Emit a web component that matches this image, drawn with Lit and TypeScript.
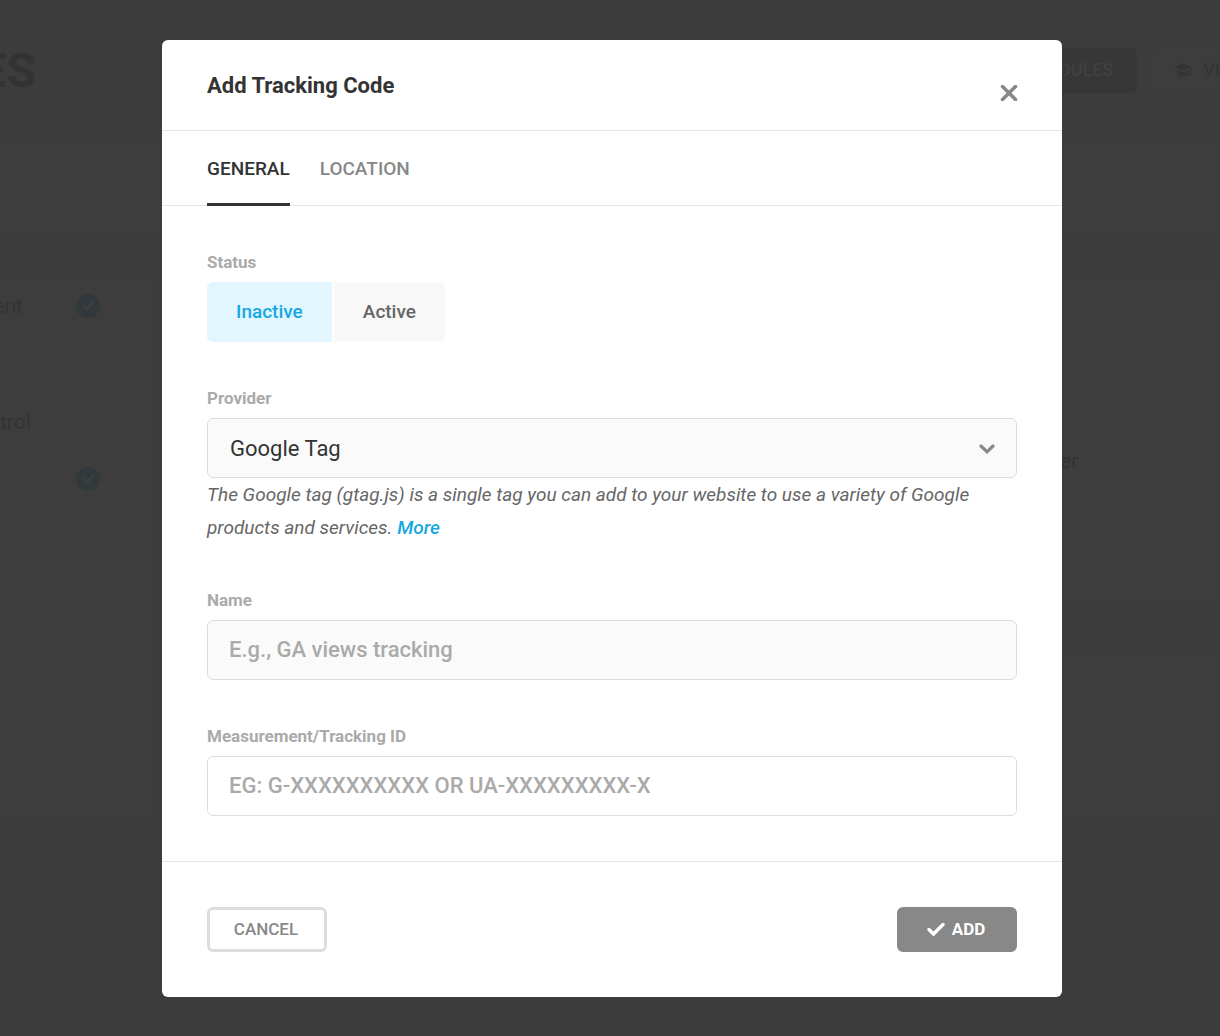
import { LitElement, html, css, svg } from "lit";
import { customElement, state } from "lit/decorators.js";

const tick = svg`<path d="M2 8.500 6.500 13 16 3.500" fill="none" stroke="currentColor" stroke-width="3.400" stroke-linecap="round"/>`;

/* Dimmed page that stays behind the dialog. */
@customElement("page-backdrop")
export class PageBackdrop extends LitElement {
  static styles = css`
    :host {
      display: block;
      min-height: 100vh;
      overflow: hidden;
      background: #3c3c3c;
      color: #333;
      font-family: Roboto, "Liberation Sans", sans-serif;
    }
    .top {
      display: flex;
      align-items: center;
      justify-content: space-between;
      height: 45px;
      padding: 48px 0 52px;
    }
    .heading {
      display: flex;
      justify-content: flex-end;
      width: 36px;
      margin: 0;
      font-size: 48px;
      line-height: 45px;
      font-weight: 700;
    }
    .actions {
      display: flex;
      gap: 17px;
    }
    .action {
      display: flex;
      align-items: center;
      gap: 10px;
      box-sizing: border-box;
      height: 45px;
      border: 0;
      border-radius: 6px 0 0 6px;
      padding: 0 0 2px 19px;
      background: #3d3d3d;
      color: #343434;
      font: 500 18px Roboto, "Liberation Sans", sans-serif;
    }
    .action.filled {
      border-radius: 6px;
      padding: 0 24px 2px;
      background: #373737;
      color: #404040;
    }
    .card {
      background: #3d3d3d;
      height: 92px;
    }
    .columns {
      display: flex;
      justify-content: space-between;
      margin-top: 45px;
    }
    .column {
      display: flex;
      flex-direction: column;
      width: 160px;
      font-size: 21px;
      line-height: 24px;
    }
    .left {
      box-sizing: border-box;
      background: #3d3d3d;
      width: 155px;
      padding-top: 12px;
    }
    .row {
      display: flex;
      align-items: center;
      justify-content: space-between;
      height: 24px;
      padding-right: 55px;
      margin-bottom: 92px;
    }
    .row.tight {
      margin-bottom: 33px;
    }
    .row.end {
      justify-content: flex-end;
    }
    .clipped {
      display: flex;
      justify-content: flex-end;
      width: 23px;
    }
    .badge {
      width: 24px;
      height: 24px;
    }
    .panel {
      box-sizing: border-box;
      background: #3d3d3d;
      height: 316px;
      padding-top: 167px;
    }
    .panel.short {
      height: 86px;
      margin-top: 53px;
    }
  `;

  private badge() {
    return html`<svg class="badge" viewBox="0 0 24 24" aria-hidden="true">
      <circle cx="12" cy="12" r="12" fill="#31393d" />
      <path d="m7.500 12.200 3.200 3.200 6.200-6.200" fill="none" stroke="#3e3e3e" stroke-width="3" stroke-linecap="round" />
    </svg>`;
  }

  render() {
    return html`
      <div class="top">
        <h1 class="heading">ES</h1>
        <div class="actions">
          <button class="action filled">DULES</button>
          <button class="action">
            <svg width="20" height="16" viewBox="0 0 20 16" aria-hidden="true">
              <path d="M10 1 0.8 4.9 10 8.8l7.2-3.1v4.5c-.6.4-.9 1-.3 1.7L16.300 14h2.600l-.5-2.100c.5-.7.3-1.300-.2-1.700V5.200zM4 7.700v4.400c2.500 3.200 9.500 3.200 12 0V7.700l-6 2.600z" fill="#343434" />
            </svg>
            VI
          </button>
        </div>
      </div>
      <div class="card"></div>
      <div class="columns">
        <div class="column left">
          <div class="row"><span class="clipped">ent</span>${this.badge()}</div>
          <div class="row tight"><span>trol</span></div>
          <div class="row end">${this.badge()}</div>
        </div>
        <div class="column">
          <div class="panel">er</div>
          <div class="panel short"></div>
        </div>
      </div>
    `;
  }
}

@customElement("tracking-dialog")
export class TrackingDialog extends LitElement {
  static styles = css`
    :host {
      display: block;
      width: 100%;
      max-width: 900px;
      overflow: hidden;
      border-radius: 6px;
      background: #fff;
      color: #333;
      font-family: Roboto, "Liberation Sans", sans-serif;
    }
    button,
    input,
    select {
      font-family: inherit;
      margin: 0;
    }
    .header {
      display: flex;
      align-items: flex-start;
      justify-content: space-between;
      padding: 30px 37px 22px 45px;
      border-bottom: 1px solid #e6e6e6;
    }
    .title {
      margin: 0;
      font-size: 22px;
      line-height: 32px;
      font-weight: 700;
    }
    .close {
      display: flex;
      margin-top: 8px;
      border: 0;
      padding: 7px;
      background: none;
      color: #888;
    }
    .tabs {
      display: flex;
      gap: 30px;
      padding: 0 45px;
      border-bottom: 1px solid #e6e6e6;
    }
    .tab {
      height: 75px;
      margin-bottom: -1px;
      border: 0;
      border-bottom: 3px solid transparent;
      padding: 2px 0 0;
      background: none;
      color: #888;
      font-size: 19px;
      font-weight: 500;
    }
    .tab.selected {
      border-color: #333;
      color: #333;
    }
    .body {
      display: flex;
      flex-direction: column;
      gap: 45px;
      padding: 45px;
    }
    .field {
      display: flex;
      flex-direction: column;
      min-width: 0;
      border: 0;
      margin: 0;
      padding: 0;
    }
    .label {
      margin-bottom: 8px;
      padding: 0;
      color: #aaa;
      font-size: 17px;
      line-height: 23px;
      font-weight: 700;
    }
    .switch {
      display: flex;
      gap: 2px;
    }
    .option {
      position: relative;
      padding: 0 29px;
      background: #f8f8f8;
      color: #666;
      font-size: 19px;
      line-height: 60px;
      font-weight: 500;
    }
    .option:first-child {
      border-radius: 6px 0 0 6px;
    }
    .option:last-child {
      border-radius: 0 6px 6px 0;
    }
    .option.on {
      background: #e1f6ff;
      color: #17a8e3;
    }
    .radio {
      position: absolute;
      inset: 0;
      opacity: 0;
    }
    .picker {
      display: grid;
      align-items: center;
    }
    .picker > * {
      grid-area: 1 / 1;
    }
    .chevron {
      justify-self: end;
      margin-right: 22px;
      color: #888;
      pointer-events: none;
    }
    .control {
      box-sizing: border-box;
      width: 100%;
      height: 60px;
      border: 1px solid #ddd;
      border-radius: 6px;
      padding: 0 21px 2px;
      background: #fafafa;
      color: #333;
      font-size: 22px;
      font-weight: 500;
      outline: none;
      appearance: none;
    }
    .control.plain {
      background: #fff;
    }
    .control.choice {
      padding: 0 22px;
      font-weight: 400;
    }
    .control::placeholder {
      color: #aaa;
      opacity: 1;
    }
    .hint {
      margin: 0;
      color: #666;
      font-size: 19px;
      line-height: 33px;
      font-style: italic;
    }
    .more {
      color: #17a8e3;
      font-weight: 500;
      text-decoration: none;
    }
    .footer {
      display: flex;
      justify-content: space-between;
      padding: 45px;
      border-top: 1px solid #e6e6e6;
    }
    .button {
      display: flex;
      align-items: center;
      justify-content: center;
      gap: 7px;
      box-sizing: border-box;
      min-width: 120px;
      height: 45px;
      border: 3px solid #ddd;
      border-radius: 6px;
      padding: 0 22px 2px 20px;
      background: #fff;
      color: #888;
      font-size: 17px;
      font-weight: 500;
    }
    .button.primary {
      border-color: #888;
      background: #888;
      color: #fff;
      font-weight: 700;
    }
  `;

  @state() private tab = "GENERAL";
  @state() private status = "Inactive";

  render() {
    return html`
      <header class="header">
        <h2 class="title" id="title">Add Tracking Code</h2>
        <button class="close" aria-label="Close">
          <svg width="18" height="16" viewBox="0 0 18 16" aria-hidden="true">
            <path d="M2.500 1.500l13 13M15.500 1.500l-13 13" stroke="currentColor" stroke-width="3.600" stroke-linecap="round" />
          </svg>
        </button>
      </header>
      <div class="tabs" role="tablist">
        ${["GENERAL", "LOCATION"].map(
          (name) => html`<button
            class="tab ${this.tab === name ? "selected" : ""}"
            role="tab"
            aria-selected=${this.tab === name ? "true" : "false"}
            @click=${() => (this.tab = name)}
          >${name}</button>`
        )}
      </div>
      <div class="body">
        <fieldset class="field">
          <legend class="label">Status</legend>
          <div class="switch">
            ${["Inactive", "Active"].map(
              (name) => html`<label class="option ${this.status === name ? "on" : ""}"
                ><input
                  class="radio"
                  type="radio"
                  name="status"
                  .checked=${this.status === name}
                  @change=${() => (this.status = name)}
                />${name}</label>`
            )}
          </div>
        </fieldset>
        <div class="field">
          <label class="label" for="provider">Provider</label>
          <div class="picker">
            <select class="control choice" id="provider">
              <option>Google Tag</option>
            </select>
            <svg class="chevron" width="16" height="12" viewBox="0 0 16 12" aria-hidden="true">
              <path d="M2 4l6 5.800L14 4" fill="none" stroke="currentColor" stroke-width="3.200" stroke-linecap="round" />
            </svg>
          </div>
          <p class="hint">
            The Google tag (gtag.js) is a single tag you can add to your website to use a variety of Google
            products and services. <a class="more" href="#more">More</a>
          </p>
        </div>
        <div class="field">
          <label class="label" for="name">Name</label>
          <input class="control" id="name" type="text" placeholder="E.g., GA views tracking" />
        </div>
        <div class="field">
          <label class="label" for="tracking">Measurement/Tracking ID</label>
          <input class="control plain" id="tracking" type="text" placeholder="EG: G-XXXXXXXXXX OR UA-XXXXXXXXX-X" />
        </div>
      </div>
      <footer class="footer">
        <button class="button">CANCEL</button>
        <button class="button primary">
          <svg width="18" height="16" viewBox="0 0 18 16" aria-hidden="true">${tick}</svg>
          ADD
        </button>
      </footer>
    `;
  }
}

@customElement("app-root")
export class AppRoot extends LitElement {
  static styles = css`
    :host {
      display: grid;
    }
    .page,
    .overlay {
      grid-area: 1 / 1;
      min-width: 0;
    }
    .overlay {
      position: relative;
      display: flex;
      align-items: flex-start;
      justify-content: center;
      padding: 40px 36px 39px 40px;
    }
  `;

  render() {
    return html`
      <page-backdrop class="page"></page-backdrop>
      <div class="overlay">
        <tracking-dialog role="dialog" aria-label="Add Tracking Code"></tracking-dialog>
      </div>
    `;
  }
}
